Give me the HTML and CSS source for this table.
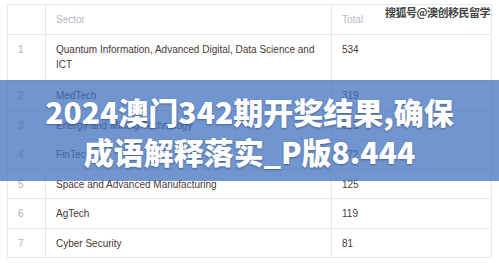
FILE: index.html
```html
<!DOCTYPE html>
<html lang="zh">
<head>
<meta charset="utf-8">
<link rel="stylesheet" href="styles.css">
</head>
<body>
<div class="page">
  <table class="grid">
    <thead>
      <tr><th class="c-idx"></th><th class="c-sector">Sector</th><th class="c-total">Total</th></tr>
    </thead>
    <tbody>
      <tr class="tall"><td class="c-idx">1</td><td class="nowrap">Quantum Information, Advanced Digital, Data Science and<br>ICT</td><td>534</td></tr>
      <tr><td class="c-idx">2</td><td>MedTech</td><td>319</td></tr>
      <tr><td class="c-idx">3</td><td>Energy and Mining Technology</td><td>315</td></tr>
      <tr><td class="c-idx">4</td><td>FinTech</td><td>172</td></tr>
      <tr><td class="c-idx">5</td><td>Space and Advanced Manufacturing</td><td>125</td></tr>
      <tr><td class="c-idx">6</td><td>AgTech</td><td>119</td></tr>
      <tr><td class="c-idx">7</td><td>Cyber Security</td><td>81</td></tr>
    </tbody>
  </table>
  <div class="watermark">搜狐号@澳创移民留学</div>
  <div class="banner">
    <div class="title">2024澳门342期开奖结果,确保<br>成语解释落实_P版8.444</div>
  </div>
</div>
</body>
</html>
```
FILE: styles.css
```css
html, body {
  margin: 0;
  padding: 0;
  background: #ffffff;
}
.page {
  position: relative;
  width: 499px;
  height: 263px;
  overflow: hidden;
  padding: 4px 7px 0 7px;
  box-sizing: border-box;
}
.grid {
  width: 485px;
  border-collapse: collapse;
  font-family: "Liberation Sans", Arial, sans-serif;
  font-size: 10px;
  color: #4a3838;
  border: 1px solid #e8e8e8;
}
.grid th, .grid td {
  border: 1px solid #e8e8e8;
  padding: 7px 10px 6.5px 10px;
  line-height: 15px;
  text-align: left;
  vertical-align: top;
}
.grid th {
  font-weight: normal;
  color: #b5b9c4;
  padding-bottom: 7px;
}
.grid .tall td {
  padding-bottom: 8px;
}
.grid .nowrap {
  white-space: nowrap;
}
.grid .c-idx {
  width: 17px;
  padding-left: 10px;
  color: #b0b0b0;
}
.grid .c-total {
  width: 139px;
}
.watermark {
  position: absolute;
  top: 4px;
  right: 9px;
  font-family: "Noto Sans CJK SC", sans-serif;
  font-size: 11px;
  line-height: 16px;
  font-weight: bold;
  color: #444444;
  text-shadow: 0 0 2px #ffffff, 0 0 2px #ffffff, 0 0 1px #ffffff;
  letter-spacing: -0.5px;
}
.banner {
  position: absolute;
  left: 0;
  top: 80px;
  width: 499px;
  height: 101px;
  background: rgba(62, 112, 190, 0.74);
  display: flex;
  align-items: center;
  justify-content: center;
}
.title {
  font-family: "Noto Sans CJK SC", sans-serif;
  font-weight: 900;
  font-size: 30px;
  line-height: 40px;
  color: #ffffff;
  text-align: center;
  text-shadow: 0 1px 2px rgba(30, 50, 90, 0.5);
}
```
